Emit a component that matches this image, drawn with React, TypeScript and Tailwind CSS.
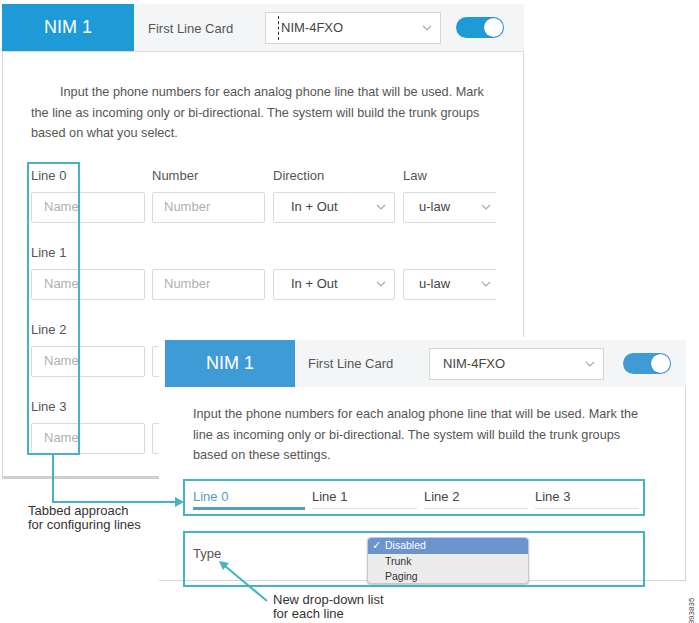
import React from "react";

const Chevron = () => (
  <svg width="10" height="6" viewBox="0 0 10 6" className="shrink-0">
    <polyline points="1,1 5,5 9,1" fill="none" stroke="#a9a9a9" strokeWidth="1.2" />
  </svg>
);

const Toggle = ({ bg }: { bg: string }) => (
  <div className={`relative w-[48px] h-[21px] rounded-full ${bg}`}>
    <div className="absolute right-[1px] top-[1px] w-[19px] h-[19px] rounded-full bg-white shadow-[0_0_1px_rgba(0,0,0,0.4)]" />
  </div>
);

function TopPanel() {
  const rows = ["Line 0", "Line 1", "Line 2", "Line 3"];
  return (
    <div className="absolute left-[2px] top-[4px] w-[522px] h-[471px] flex flex-col">
      <div className="flex items-center h-[48px] bg-[#f4f5f7] border-b border-[#dcdcdc] shrink-0">
        <div className="w-[132px] h-full bg-[#1e9ad6] text-white text-[18px] flex items-center justify-center">NIM 1</div>
        <div className="w-[131px] pl-[14px] text-[13px] text-[#555] pt-[3px]">First Line Card</div>
        <div className="w-[176px] h-[32px] bg-white border border-[#d6d6d6] flex items-center pl-[12px] pr-[8px]">
          <span className="w-0 h-[24px] border-l border-dashed border-[#333] mr-[2px]" />
          <span className="text-[13px] text-[#444] flex-1">NIM-4FXO</span>
          <Chevron />
        </div>
        <div className="ml-[15px]">
          <Toggle bg="bg-[#1e9ad6]" />
        </div>
      </div>
      <div className="flex-1 bg-white border-l border-r border-[#d6d6d6] border-b-[3px] border-b-[#cfcfcf] pl-[28px] pt-[30px]">
        <p className="text-[12.7px] leading-[20.5px] text-[#555] whitespace-nowrap">
          <span className="block pl-[29px]">Input the phone numbers for each analog phone line that will be used. Mark</span>
          <span className="block">the line as incoming only or bi-directional. The system will build the trunk groups</span>
          <span className="block">based on what you select.</span>
        </p>
        <div className="w-[465px] overflow-hidden mt-[24px]">
          {rows.map((r, i) => {
            const hidden = i >= 2;
            return (
              <div key={r} className="mb-[22px]">
                <div className="flex h-[16px] mb-[8px] text-[13px] leading-[16px] text-[#555]">
                  <div className="w-[121px]">{r}</div>
                  {i === 0 && (
                    <>
                      <div className="w-[121px]">Number</div>
                      <div className="w-[130px]">Direction</div>
                      <div>Law</div>
                    </>
                  )}
                </div>
                <div className="flex h-[31px] w-[520px]">
                  <div className="w-[114px] h-full border border-[#dadada] rounded-[2px] flex items-center pl-[12px] text-[13px] text-[#b0b0b0]">Name</div>
                  <div className="ml-[7px] w-[113px] h-full border border-[#dadada] rounded-[2px] flex items-center pl-[11px] text-[13px] text-[#b0b0b0]">
                    {hidden ? null : "Number"}
                  </div>
                  {!hidden && (
                    <>
                      <div className="ml-[8px] w-[122px] h-full border border-[#dadada] rounded-[2px] flex items-center pl-[17px] pr-[8px] text-[13px] text-[#444]">
                        <span className="flex-1">In + Out</span>
                        <Chevron />
                      </div>
                      <div className="ml-[8px] w-[120px] h-full border border-[#dadada] rounded-[2px] flex items-center pl-[15px] text-[13px] text-[#444]">
                        <span className="w-[62px]">u-law</span>
                        <Chevron />
                      </div>
                    </>
                  )}
                </div>
              </div>
            );
          })}
        </div>
      </div>
    </div>
  );
}

function BottomPanel() {
  const tabs = [
    { t: "Line 0", w: "w-[112px]", active: true },
    { t: "Line 1", w: "w-[105px]", active: false },
    { t: "Line 2", w: "w-[104px]", active: false },
    { t: "Line 3", w: "w-[104px]", active: false },
  ];
  return (
    <div className="absolute left-[159px] top-[337px] w-[527px] h-[244px] bg-white flex flex-col">
      <div className="ml-[6px] mt-[3px] flex items-center h-[47px] bg-[#f4f5f7] shrink-0">
        <div className="w-[130px] h-full bg-[#3f9bd6] text-white text-[18px] flex items-center justify-center">NIM 1</div>
        <div className="w-[134px] pl-[13px] text-[13px] text-[#555]">First Line Card</div>
        <div className="w-[175px] h-[32px] bg-white border border-[#d6d6d6] flex items-center pl-[13px] pr-[8px]">
          <span className="text-[13px] text-[#444] flex-1">NIM-4FXO</span>
          <Chevron />
        </div>
        <div className="ml-[19px]">
          <Toggle bg="bg-[#3f9bd6]" />
        </div>
      </div>
      <div className="flex-1 border-r border-b border-[#d6d6d6] pl-[34px] pt-[17px]">
        <p className="text-[12.7px] leading-[20.5px] text-[#555] whitespace-nowrap">
          <span className="block">Input the phone numbers for each analog phone line that will be used. Mark the</span>
          <span className="block">line as incoming only or bi-directional. The system will build the trunk groups</span>
          <span className="block">based on these settings.</span>
        </p>
        <div className="flex gap-[7px] mt-[23px] items-start">
          {tabs.map((tb) => (
            <div
              key={tb.t}
              className={`${tb.w} text-[13px] leading-[16px] ${
                tb.active
                  ? "text-[#5b9bc0] pb-[2px] border-b-[3px] border-[#5d9cc0]"
                  : "text-[#444] pb-[3px] border-b border-[#dedede]"
              }`}
            >
              {tb.t}
            </div>
          ))}
        </div>
        <div className="mt-[36px] text-[13px] leading-[16px] text-[#555]">Type</div>
      </div>
    </div>
  );
}

export default function App() {
  const teal = "#45b3c1";
  return (
    <div className="relative w-[699px] h-[623px] bg-white overflow-hidden font-['Liberation_Sans',Arial,sans-serif]">
      <TopPanel />
      <BottomPanel />

      {/* dropdown menu */}
      <div className="absolute left-[367px] top-[537px] w-[162px] h-[47px] rounded-[4px] bg-[#ececec] border border-[#c9c9c9] shadow-[0_1px_2px_rgba(0,0,0,0.25)] overflow-hidden text-[10.5px] text-[#333]">
        <div className="h-[16px] bg-[#6b93cd] text-white flex items-center pl-[4px]">
          <span className="w-[13px]">✓</span>
          <span>Disabled</span>
        </div>
        <div className="h-[14px] flex items-center pl-[17px] mt-[1px]">Trunk</div>
        <div className="h-[15px] flex items-center pl-[17px]">Paging</div>
      </div>

      {/* teal callout boxes */}
      <div className="absolute left-[27px] top-[162px] w-[53px] h-[293px] border-2 border-[#45b3c1]" />
      <div className="absolute left-[183px] top-[479px] w-[462px] h-[37px] border-2 border-[#45b3c1]" />
      <div className="absolute left-[183px] top-[531px] w-[462px] h-[56px] border-2 border-[#45b3c1]" />

      <svg className="absolute left-0 top-0 pointer-events-none" width="699" height="623">
        <polyline points="53,455 53,502 176,502" fill="none" stroke={teal} strokeWidth="2" />
        <polygon points="175,497 184,502 175,507" fill={teal} />
        <line x1="267" y1="601" x2="225" y2="566" stroke={teal} strokeWidth="2" />
        <polygon points="219,561 229,563 223,570" fill={teal} />
      </svg>

      {/* annotations */}
      <div className="absolute left-[28px] top-[504px] text-[13px] leading-[14px] text-[#333]">
        <div>Tabbed approach</div>
        <div>for configuring lines</div>
      </div>
      <div className="absolute left-[273px] top-[593px] text-[13px] leading-[14px] text-[#333]">
        <div>New drop-down list</div>
        <div>for each line</div>
      </div>
      <div className="absolute left-[679px] top-[607px] -rotate-90 text-[8px] leading-[8px] text-[#444]">393835</div>
    </div>
  );
}
